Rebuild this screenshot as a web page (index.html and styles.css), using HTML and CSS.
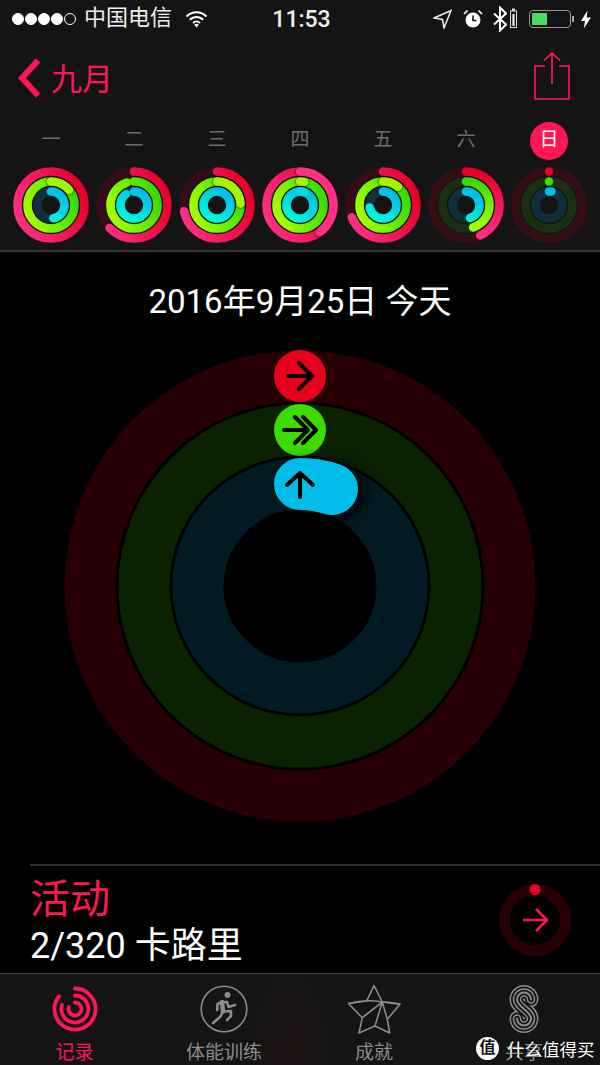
FILE: index.html
```html
<!DOCTYPE html>
<html>
	<head>
		<meta charset="utf-8" />
		<title>活动</title>
		<link rel="stylesheet" href="styles.css">
	</head>
	<body>
		<div id="phone">
			<div class="top">
				<div class="status">
					<div class="status-left">
						<span class="dots"><i></i><i></i><i></i><i></i><i class="off"></i></span>
						<span class="carrier">中国电信</span>
						<svg class="wifi" width="23" height="18" viewBox="0 0 22 18"><path d="M1 6.500a14 14 0 0 1 20 0M4.300 9.800a9.400 9.400 0 0 1 13.400 0M7.500 13a5 5 0 0 1 7 0" fill="none" stroke="#fff" stroke-width="2"/><path d="M11 17.500l-2.300-2.800a3.500 3.500 0 0 1 4.600 0z" fill="#fff"/></svg>
					</div>
					<div class="clock">11:53</div>
					<div class="status-right">
						<svg class="s-loc" width="19" height="20" viewBox="0 0 19 20"><path d="M1 9L18 1.500 11 19 9.500 10.500z" fill="none" stroke="#eee" stroke-width="1.500"/></svg>
						<svg class="s-alarm" width="20" height="20" viewBox="0 0 20 20"><circle cx="10" cy="11" r="7.500" fill="#fff"/><path d="M10 6.500V11.500h3.500" fill="none" stroke="#141414" stroke-width="1.600"/><path d="M1 5l3.500-3.500M19 5l-3.500-3.500" stroke="#fff" stroke-width="1.600"/></svg>
						<svg class="s-bt" width="14" height="26" viewBox="0 0 14 26"><path d="M1 7.500l12 11-6 6V1.500l6 6-12 11" fill="none" stroke="#fff" stroke-width="2"/></svg>
						<svg class="s-tiny" width="7" height="20" viewBox="0 0 7 20"><rect x="0.500" y="3" width="6" height="16.500" fill="none" stroke="#ddd"/><rect x="2" y="0.500" width="3" height="2.500" fill="#ddd"/><rect x="2.500" y="6" width="2" height="12" fill="#fff"/></svg>
						<div class="batt"><div class="batt-fill"></div></div>
						<i class="batt-tip"></i>
						<svg class="bolt" width="10" height="19" viewBox="0 0 10 18"><path d="M6.500 0L0 10.500h4L2.800 18 10 7H5.700z" fill="#fff"/></svg>
					</div>
				</div>
				<div class="nav">
					<div class="back">
						<svg width="26" height="42" viewBox="0 0 26 42"><path d="M22 3.500L6 21l16 17.500" fill="none" stroke="#ff1654" stroke-width="6"/></svg>
						<span>九月</span>
					</div>
					<svg class="share" width="38" height="50" viewBox="0 0 38 50"><path d="M12 15H2v33h34V15H26M19 33V2M11 9.500L19 2l8 7.500" fill="none" stroke="#ff1654" stroke-width="1.700"/></svg>
				</div>

				<svg class="defs" width="0" height="0">
					<defs>
						<linearGradient id="redA" x1="1" y1="0.300" x2="0" y2="0.700"><stop offset="0" stop-color="#e4002a"/><stop offset="1" stop-color="#ff2f84"/></linearGradient>
						<linearGradient id="redB" x1="0.500" y1="0" x2="0.500" y2="1"><stop offset="0" stop-color="#e4002a"/><stop offset="1" stop-color="#ff2f84"/></linearGradient>
						<linearGradient id="greenA" x1="1" y1="0.300" x2="0" y2="0.700"><stop offset="0" stop-color="#38dc00"/><stop offset="1" stop-color="#a2ff00"/></linearGradient>
						<linearGradient id="greenB" x1="0.500" y1="0" x2="0.500" y2="1"><stop offset="0" stop-color="#38dc00"/><stop offset="1" stop-color="#a8ff00"/></linearGradient>
						<linearGradient id="blueA" x1="0.800" y1="0" x2="0.200" y2="1"><stop offset="0" stop-color="#00bce8"/><stop offset="1" stop-color="#00f8d8"/></linearGradient>
					</defs>
				</svg>

				<div class="week">
					<div class="day">
						<span class="day-name">一</span>
						<svg class="rings" viewBox="0 0 78 78">
							<circle class="t-red" cx="39" cy="39" r="33.500"/><circle class="t-green" cx="39" cy="39" r="23.500"/><circle class="t-blue" cx="39" cy="39" r="13.500"/>
							<circle class="a-red" cx="39" cy="39" r="33.500" pathLength="100" stroke-dasharray="98 2" stroke-dashoffset="25"/>
							<circle class="a-green" cx="39" cy="39" r="23.500"/>
							<circle class="over-green" cx="39" cy="39" r="23.500" pathLength="100" stroke-dasharray="14 86" stroke-dashoffset="25"/>
							<circle class="a-blue" cx="39" cy="39" r="13.500" pathLength="100" stroke-dasharray="47 53" stroke-dashoffset="25"/>
						</svg>
					</div>
					<div class="day">
						<span class="day-name">二</span>
						<svg class="rings" viewBox="0 0 78 78">
							<circle class="t-red" cx="39" cy="39" r="33.500"/><circle class="t-green" cx="39" cy="39" r="23.500"/><circle class="t-blue" cx="39" cy="39" r="13.500"/>
							<circle class="a-red" cx="39" cy="39" r="33.500" pathLength="100" stroke-dasharray="63 37" stroke-dashoffset="25"/>
							<circle class="a-green" cx="39" cy="39" r="23.500" pathLength="100" stroke-dasharray="95 5" stroke-dashoffset="25"/>
							<circle class="a-blue" cx="39" cy="39" r="13.500" pathLength="100" stroke-dasharray="90 10" stroke-dashoffset="25"/>
						</svg>
					</div>
					<div class="day">
						<span class="day-name">三</span>
						<svg class="rings" viewBox="0 0 78 78">
							<circle class="t-red" cx="39" cy="39" r="33.500"/><circle class="t-green" cx="39" cy="39" r="23.500"/><circle class="t-blue" cx="39" cy="39" r="13.500"/>
							<circle class="a-red" cx="39" cy="39" r="33.500" pathLength="100" stroke-dasharray="72 28" stroke-dashoffset="25"/>
							<circle class="a-green" cx="39" cy="39" r="23.500"/>
							<circle class="over-green" cx="39" cy="39" r="23.500" pathLength="100" stroke-dasharray="24 76" stroke-dashoffset="25"/>
							<circle class="a-blue" cx="39" cy="39" r="13.500"/>
						</svg>
					</div>
					<div class="day">
						<span class="day-name">四</span>
						<svg class="rings" viewBox="0 0 78 78">
							<circle class="t-red" cx="39" cy="39" r="33.500"/><circle class="t-green" cx="39" cy="39" r="23.500"/><circle class="t-blue" cx="39" cy="39" r="13.500"/>
							<circle class="a-red" cx="39" cy="39" r="33.500"/>
							<circle class="over-red" cx="39" cy="39" r="33.500" pathLength="100" stroke-dasharray="40 60" stroke-dashoffset="25"/>
							<circle class="a-green" cx="39" cy="39" r="23.500"/>
							<circle class="over-green" cx="39" cy="39" r="23.500" pathLength="100" stroke-dasharray="3 97" stroke-dashoffset="25"/>
							<circle class="a-blue" cx="39" cy="39" r="13.500"/>
							<circle class="over-blue" cx="39" cy="39" r="13.500" pathLength="100" stroke-dasharray="5 95" stroke-dashoffset="25"/>
						</svg>
					</div>
					<div class="day">
						<span class="day-name">五</span>
						<svg class="rings" viewBox="0 0 78 78">
							<circle class="t-red" cx="39" cy="39" r="33.500"/><circle class="t-green" cx="39" cy="39" r="23.500"/><circle class="t-blue" cx="39" cy="39" r="13.500"/>
							<circle class="a-red" cx="39" cy="39" r="33.500" pathLength="100" stroke-dasharray="69 31" stroke-dashoffset="25"/>
							<circle class="a-green" cx="39" cy="39" r="23.500"/>
							<circle class="over-green" cx="39" cy="39" r="23.500" pathLength="100" stroke-dasharray="11 89" stroke-dashoffset="25"/>
							<circle class="a-blue" cx="39" cy="39" r="13.500" pathLength="100" stroke-dasharray="72 28" stroke-dashoffset="25"/>
						</svg>
					</div>
					<div class="day">
						<span class="day-name">六</span>
						<svg class="rings" viewBox="0 0 78 78">
							<circle class="t-red" cx="39" cy="39" r="33.500"/><circle class="t-green" cx="39" cy="39" r="23.500"/><circle class="t-blue" cx="39" cy="39" r="13.500"/>
							<circle class="a-red b" cx="39" cy="39" r="33.500" pathLength="100" stroke-dasharray="43 57" stroke-dashoffset="25"/>
							<circle class="a-green b" cx="39" cy="39" r="23.500" pathLength="100" stroke-dasharray="45 55" stroke-dashoffset="25"/>
							<circle class="a-blue" cx="39" cy="39" r="13.500" pathLength="100" stroke-dasharray="45 55" stroke-dashoffset="25"/>
						</svg>
					</div>
					<div class="day">
						<span class="day-name today">日</span>
						<svg class="rings" viewBox="0 0 78 78">
							<circle class="t-red" cx="39" cy="39" r="33.500"/><circle class="t-green" cx="39" cy="39" r="23.500"/><circle class="t-blue" cx="39" cy="39" r="13.500"/>
							<circle class="dot-red" cx="39" cy="5.500" r="4.200"/>
							<circle class="dot-green" cx="39" cy="15.500" r="4.200"/>
							<path class="dot-blue" d="M39 25.500h2.500"/>
						</svg>
					</div>
				</div>
			</div>

			<div class="main">
				<div class="date">2016年9月25日 今天</div>
				<svg class="big-rings" width="472" height="472" viewBox="0 0 472 472">
					<circle class="big-track" cx="236" cy="236" r="210" stroke="#260003"/>
					<circle class="big-track" cx="236" cy="236" r="156" stroke="#0a2200"/>
					<circle class="big-track" cx="236" cy="236" r="102" stroke="#001b23"/>
					<circle cx="236" cy="26" r="26" fill="#e6001e"/>
					<circle cx="236" cy="80" r="26" fill="#3cdc00"/>
					<path class="big-blue" d="M236 134A102 102 0 0 1 268 139.100"/>
					<g class="big-arrow">
						<path d="M224 26h24M235 13l13 13-13 13"/>
						<path d="M220 80h24M231 67l13 13-13 13M239 67l13 13-13 13"/>
						<path d="M236 147v-24M223 135l13-12 13 12"/>
					</g>
				</svg>
			</div>

			<div class="summary">
				<div class="summary-text">
					<div class="summary-title">活动</div>
					<div class="summary-value">2/320 卡路里</div>
				</div>
				<svg class="small-ring" width="72" height="72" viewBox="0 0 72 72">
					<circle cx="36" cy="36" r="30.500" fill="none" stroke="#260003" stroke-width="11"/>
					<circle cx="36" cy="5.500" r="5.500" fill="#e6001e"/>
					<path d="M24 36h22M37 25l11 11-11 11" fill="none" stroke="#ff1654" stroke-width="2.500"/>
				</svg>
			</div>

			<div class="tabs">
				<div class="tab active">
					<svg width="46" height="48" viewBox="0 0 46 46" fill="none" stroke="#ff1654" stroke-width="3.800" stroke-linecap="round">
						<path d="M23 2.500A20.500 20.500 0 1 1 7 10.200"/>
						<path d="M23 9.500A13.500 13.500 0 1 1 10 19"/>
						<path d="M23 16.500A6.500 6.500 0 1 1 16.800 21"/>
					</svg>
					<span>记录</span>
				</div>
				<div class="tab">
					<svg width="48" height="48" viewBox="0 0 48 48">
						<circle cx="24" cy="24" r="22.800" fill="none" stroke="#8c8c8c" stroke-width="1.600"/>
						<circle cx="27.500" cy="10" r="3" fill="#8c8c8c"/>
						<path d="M22 17l1 9.500" fill="none" stroke="#8c8c8c" stroke-width="4.500" stroke-linecap="round"/>
						<path d="M22 17l-4.500 2-.3 6M22 17h5l1.500 5 6.500-2M23 26.500l8-.5v5l-4 4M23 26.500l-3 5.500-7 6" fill="none" stroke="#8c8c8c" stroke-width="2.600" stroke-linecap="round" stroke-linejoin="round"/>
					</svg>
					<span>体能训练</span>
				</div>
				<div class="tab">
					<svg width="54" height="50" viewBox="0 0 54 50" fill="none" stroke="#8c8c8c" stroke-width="1.600" stroke-linejoin="round">
						<path d="M27 1.500L19.700 17 1.500 19.500 15.300 33.700 12 49 28 42 42.700 49 40.300 35.300 53 20.300 35.300 18z"/>
						<path d="M1.500 19.500Q18 15 35.300 18 45 18 53 20.300M35.300 18L15.300 33.700M35.300 18L28 42M35.300 18L40.300 35.300"/>
					</svg>
					<span>成就</span>
				</div>
				<div class="tab">
					<svg class="share-tab" width="30" height="48" viewBox="0 0 30 48" fill="none" stroke-linecap="round">
						<path stroke="#8c8c8c" stroke-width="15" d="M22 14.500A7 7 0 0 0 8 14.500C8 22 22 26 22 33.500A7 7 0 0 1 8 33.500"/>
						<path stroke="#141414" stroke-width="12" d="M22 14.500A7 7 0 0 0 8 14.500C8 22 22 26 22 33.500A7 7 0 0 1 8 33.500"/>
						<path stroke="#8c8c8c" stroke-width="8.500" d="M22 14.500A7 7 0 0 0 8 14.500C8 22 22 26 22 33.500A7 7 0 0 1 8 33.500"/>
						<path stroke="#141414" stroke-width="5.500" d="M22 14.500A7 7 0 0 0 8 14.500C8 22 22 26 22 33.500A7 7 0 0 1 8 33.500"/>
						<path stroke="#8c8c8c" stroke-width="2" d="M22 14.500A7 7 0 0 0 8 14.500C8 22 22 26 22 33.500A7 7 0 0 1 8 33.500"/>
					</svg>
					<span>共享</span>
				</div>
			</div>

			<div class="mark">
				<span class="mark-logo">值</span>
				<span class="mark-text">什么值得买</span>
			</div>
		</div>
	</body>
</html>
```
FILE: styles.css
```css
body{
	margin: 0;
	padding: 0;
	background: #000;
}
#phone{
	width: 600px;
	height: 1065px;
	position: relative;
	overflow: hidden;
	background: #000;
	color: #fff;
	font-family: "Roboto", "Noto Sans CJK SC", sans-serif;
	display: flex;
	flex-direction: column;
}
.top{
	height: 250px;
	background: #141414;
	border-bottom: 2px solid #363636;
}
.status{
	height: 38px;
	padding: 0 9px 0 12px;
	display: grid;
	grid-template-columns: 1fr auto 1fr;
	align-items: center;
}
.status-left{
	display: flex;
	align-items: center;
}
.dots{
	display: flex;
	gap: 1px;
}
.dots i{
	width: 12px;
	height: 12px;
	border: 1px solid #fff;
	border-radius: 50%;
	background: #fff;
	box-sizing: border-box;
}
.dots i.off{
	background: none;
}
.carrier{
	font-size: 22px;
	line-height: 32px;
	margin: -3px 0 0 8px;
	color: #eee;
}
.wifi{
	margin-left: 13px;
}
.clock{
	font-size: 23px;
	font-weight: 500;
	color: #eee;
}
.status-right{
	display: flex;
	align-items: center;
	justify-content: flex-end;
}
.s-alarm{
	margin-left: 11px;
}
.s-bt{
	margin-left: 10px;
}
.s-tiny{
	margin-left: 3px;
	margin-top: -2px;
}
.batt{
	width: 42px;
	height: 18px;
	border: 1px solid #999;
	border-radius: 4px;
	padding: 2px;
	box-sizing: border-box;
	margin-left: 12px;
}
.batt-fill{
	width: 15px;
	height: 12px;
	background: #4cd964;
}
.batt-tip{
	width: 2px;
	height: 6px;
	background: #aaa;
	margin-left: 1px;
}
.bolt{
	margin-left: 7px;
}
.nav{
	height: 80px;
	padding: 0 29px 0 16px;
	display: flex;
	justify-content: space-between;
	align-items: center;
	color: #ff1654;
}
.back{
	display: flex;
	align-items: center;
	gap: 9px;
}
.back span{
	font-size: 31px;
	margin-top: -4px;
}
.share{
	margin-top: -4px;
}
.defs{
	position: absolute;
}
.week{
	display: flex;
	justify-content: space-between;
	padding: 0 12px;
}
.day{
	width: 78px;
	display: flex;
	flex-direction: column;
	align-items: center;
}
.day-name{
	width: 38px;
	height: 38px;
	line-height: 36px;
	text-align: center;
	font-size: 19px;
	color: #6c6c6c;
	border-radius: 50%;
	margin-top: 4px;
}
.day-name.today{
	background: #ff1654;
	color: #fff;
}
.rings{
	width: 78px;
	height: 78px;
	margin-top: 6px;
}
.rings circle{
	fill: none;
	stroke-width: 8.600;
	stroke-linecap: round;
}
.t-red{
	stroke: #350e15;
}
.t-green{
	stroke: #1a3010;
}
.t-blue{
	stroke: #12303c;
}
.rings .a-red{
	stroke: url(#redA);
}
.rings .a-red.b{
	stroke: url(#redB);
}
.rings .a-green{
	stroke: url(#greenA);
}
.rings .a-green.b{
	stroke: url(#greenB);
}
.rings .a-blue{
	stroke: url(#blueA);
}
.over-red{
	stroke: #ff2f84;
	filter: drop-shadow(0 0 1px #000);
}
.over-green{
	stroke: #a2f400;
	filter: drop-shadow(0 0 1px #000);
}
.over-blue{
	stroke: #00d8e0;
}
.rings .dot-red{
	fill: #e6001e;
	stroke: none;
}
.rings .dot-green{
	fill: #3cdc00;
	stroke: none;
}
.dot-blue{
	fill: none;
	stroke: #00bce8;
	stroke-width: 8.500;
	stroke-linecap: round;
}
.main{
	flex: 1;
	display: flex;
	flex-direction: column;
	align-items: center;
}
.date{
	font-size: 33px;
	margin-top: 28px;
	line-height: 44px;
	white-space: nowrap;
}
.big-rings{
	margin-top: 26px;
}
.big-track{
	fill: none;
	stroke-width: 51;
}
.big-blue{
	fill: none;
	stroke: #00bce8;
	stroke-width: 52;
	stroke-linecap: round;
	filter: drop-shadow(6px 4px 8px #000);
}
.big-arrow{
	fill: none;
	stroke: #000;
	stroke-width: 4;
	stroke-linecap: round;
	stroke-linejoin: round;
}
.summary{
	height: 109px;
	box-sizing: border-box;
	margin-left: 30px;
	padding-right: 29px;
	border-top: 2px solid #2e2e2e;
	display: flex;
	justify-content: space-between;
	align-items: center;
}
.summary-text{
	margin-top: 6px;
}
.summary-title{
	font-size: 40px;
	line-height: 46px;
	color: #ff1654;
}
.summary-value{
	font-size: 36px;
	line-height: 46px;
}
.tabs{
	height: 92px;
	box-sizing: border-box;
	padding-top: 10px;
	background: radial-gradient(ellipse 40px 90px at 290px 80px, #1f1213, #141414);
	border-top: 1px solid #444;
	display: grid;
	grid-template-columns: 149px 150px 150px 150px;
}
.tab{
	display: flex;
	flex-direction: column;
	align-items: center;
	color: #8c8c8c;
	font-size: 19px;
	line-height: 26px;
}
.tab svg{
	flex: none;
	height: 50px;
}
.tab span{
	margin-top: 6px;
}
.tab.active{
	color: #ff1654;
}
.mark{
	position: absolute;
	left: 476px;
	top: 1036px;
	display: flex;
	align-items: center;
	gap: 8px;
}
.mark-logo{
	width: 23px;
	height: 23px;
	flex: none;
	border-radius: 50%;
	background: #fff;
	color: #111;
	font-size: 16px;
	line-height: 22px;
	text-align: center;
	font-weight: 700;
}
.mark-text{
	font-size: 17.500px;
	color: #fff;
	white-space: nowrap;
	text-shadow: 0 0 2px rgba(0,0,0,.6);
}
```
